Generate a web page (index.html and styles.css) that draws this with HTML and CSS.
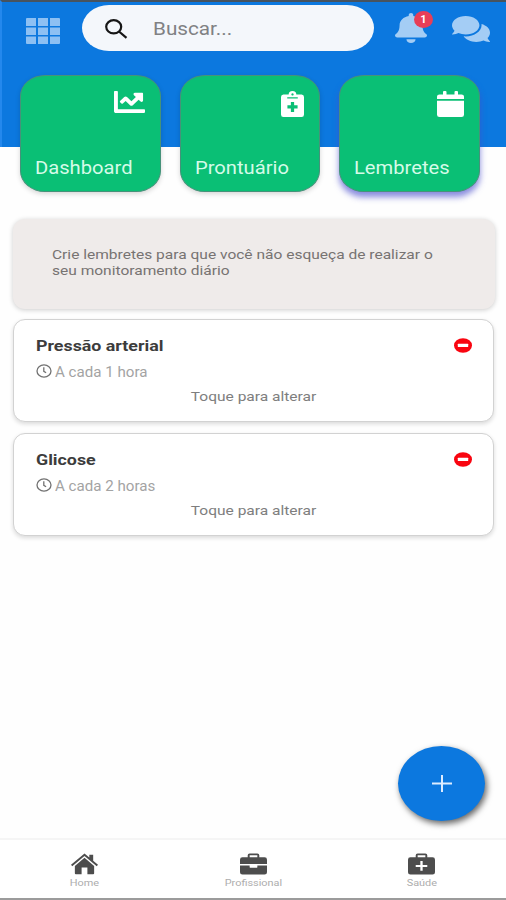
FILE: index.html
```html
<!DOCTYPE html>
<html lang="pt-BR">
  <head>
    <meta charset="UTF-8" />
    <meta name="viewport" content="width=device-width, initial-scale=1.0" />
    <title>Lembretes</title>
    <link rel="stylesheet" href="styles.css">
  </head>
  <body>
    <header class="header">
      <div class="topbar">
        <svg class="icon-grid" viewBox="0 0 34 26" preserveAspectRatio="none">
          <path d="M0 1q0-1 1-1h9v8H0zM12 0h10v8H12zM24 0h9q1 0 1 1v7H24zM0 9.500h10v7.500H0zM12 9.500h10v7.500H12zM24 9.500h10v7.500H24zM0 18.500h10V26H1q-1 0-1-1zM12 18.500h10V26H12zM24 18.500h10V25q0 1-1 1h-9z" />
        </svg>
        <div class="search">
          <svg class="icon-search" viewBox="0 0 23 20">
            <ellipse cx="8.700" cy="7.800" rx="7.500" ry="6.600" />
            <path d="M14 12.500l7.500 6.300" />
          </svg>
          <span class="wide">Buscar...</span>
        </div>
        <div class="bell">
          <svg class="icon-bell" viewBox="0 0 448 512" preserveAspectRatio="none">
            <path d="M224 512c35.320 0 63.970-28.650 63.970-64H160.030c0 35.350 28.650 64 63.970 64zm215.390-149.710c-19.320-20.760-55.470-51.990-55.470-154.290 0-77.700-54.480-139.900-127.940-155.160V32c0-17.670-14.320-32-31.980-32s-31.980 14.330-31.980 32v20.840C118.560 68.100 64.080 130.300 64.080 208c0 102.300-36.150 133.530-55.470 154.290-6 6.450-8.660 14.160-8.610 21.710.11 16.400 12.980 32 32.100 32h383.800c19.120 0 32-15.600 32.100-32 .05-7.550-2.610-15.270-8.610-21.710z" />
          </svg>
          <span class="badge">1</span>
        </div>
        <svg class="icon-chat" viewBox="0 32 576 448" preserveAspectRatio="none">
          <path d="M416 192c0-88.400-93.100-160-208-160S0 103.600 0 192c0 34.300 14.100 65.900 38 92-13.400 30.200-35.500 54.200-35.800 54.500-2.200 2.300-2.800 5.700-1.500 8.700S4.800 352 8 352c36.600 0 66.900-12.300 88.700-25 32.200 15.700 70.300 25 111.300 25 114.900 0 208-71.600 208-160zm122 220c23.900-26 38-57.700 38-92 0-66.900-53.500-124.200-129.300-148.100.9 6.600 1.300 13.300 1.300 20.100 0 105.900-107.700 192-240 192-10.800 0-21.300-.8-31.700-1.900C207.800 439.600 281.800 480 368 480c41 0 79.100-9.200 111.300-25 21.800 12.700 52.100 25 88.700 25 3.200 0 6.100-1.900 7.300-4.800 1.300-2.900.7-6.300-1.500-8.700-.3-.3-22.400-24.200-35.800-54.500z" />
        </svg>
      </div>
      <nav class="cards">
        <div class="card">
          <svg class="icon-chart" viewBox="0 64 512 384" preserveAspectRatio="none">
            <path d="M496 384H64V80c0-8.840-7.160-16-16-16H16C7.160 64 0 71.160 0 80v336c0 17.670 14.330 32 32 32h464c8.840 0 16-7.160 16-16v-32c0-8.840-7.160-16-16-16zM464 96H345.940c-21.380 0-32.090 25.850-16.970 40.970l32.400 32.400L288 242.750l-73.370-73.370c-12.500-12.500-32.760-12.500-45.250 0l-68.690 68.690c-6.250 6.250-6.250 16.380 0 22.630l22.620 22.620c6.250 6.250 16.380 6.250 22.630 0L192 237.250l73.370 73.370c12.500 12.500 32.760 12.500 45.250 0l96-96 32.400 32.400c15.120 15.120 40.970 4.410 40.970-16.970V112c.01-8.840-7.150-16-15.990-16z" />
          </svg>
          <span class="wide">Dashboard</span>
        </div>
        <div class="card">
          <svg class="icon-clip" viewBox="0 0 24 26" preserveAspectRatio="none">
            <path fill-rule="evenodd" d="M2.500 3.500H8a4 3.500 0 0 1 8 0h5.500Q24 3.500 24 6v17.500q0 2.500-2.500 2.500h-19Q0 26 0 23.500V6q0-2.500 2.500-2.500zM12 2.200a1.200 1.200 0 1 0 .01 0zM6.500 6.200v1.300h11V6.200zM10.300 11v3.300H6.700v3.300h3.600V21h3.400v-3.400h3.600v-3.300h-3.600V11z" />
          </svg>
          <span class="wide">Prontuário</span>
        </div>
        <div class="card active">
          <svg class="icon-cal" viewBox="0 0 27 26" preserveAspectRatio="none">
            <path d="M0 8V5.500Q0 3.500 2.500 3.500H6V1q0-1 1-1h1.500q1 0 1 1v2.500h8V1q0-1 1-1H20q1 0 1 1v2.500h3.500Q27 3.500 27 5.500V8zM0 9.700h27v14q0 2.300-2.500 2.300h-22Q0 26 0 23.700z" />
          </svg>
          <span class="wide">Lembretes</span>
        </div>
      </nav>
    </header>

    <main class="content">
      <div class="info">
        <p class="wide">Crie lembretes para que você não esqueça de realizar o<br>seu monitoramento diário</p>
      </div>
      <div class="reminder">
        <div class="title">
          <h2 class="wide">Pressão arterial</h2>
          <svg class="icon-remove" viewBox="0 0 18 15">
            <ellipse cx="9" cy="7.500" rx="9" ry="7.300" />
            <rect x="3.800" y="5.700" width="10.400" height="3.400" rx=".5" />
          </svg>
        </div>
        <div class="time">
          <svg class="icon-clock" viewBox="0 0 16 14">
            <ellipse cx="8" cy="7" rx="7" ry="6.100" />
            <path d="M7.800 3.200v4.200l2.300 1.400" />
          </svg>
          <span class="wide">A cada 1 hora</span>
        </div>
        <p class="hint"><span class="wide">Toque para alterar</span></p>
      </div>
      <div class="reminder">
        <div class="title">
          <h2 class="wide">Glicose</h2>
          <svg class="icon-remove" viewBox="0 0 18 15">
            <ellipse cx="9" cy="7.500" rx="9" ry="7.300" />
            <rect x="3.800" y="5.700" width="10.400" height="3.400" rx=".5" />
          </svg>
        </div>
        <div class="time">
          <svg class="icon-clock" viewBox="0 0 16 14">
            <ellipse cx="8" cy="7" rx="7" ry="6.100" />
            <path d="M7.800 3.200v4.200l2.300 1.400" />
          </svg>
          <span class="wide">A cada 2 horas</span>
        </div>
        <p class="hint"><span class="wide">Toque para alterar</span></p>
      </div>
    </main>

    <button class="fab" aria-label="Adicionar">
      <svg viewBox="0 0 20 17">
        <path d="M10 0v17M0 8.500h20" />
      </svg>
    </button>

    <footer class="tabs">
      <div class="tab">
        <svg viewBox="0 0 28 22">
          <path d="M14 4.500 24 13v7.500q0 1-1 1h-6v-7h-6v7H5q-1 0-1-1V13z" />
          <path d="M14 0 19 4.200V1.500h4v6.200l5 4.200-1.300 1.400L14 2.600 1.300 13.300 0 11.900z" />
        </svg>
        <span class="wide">Home</span>
      </div>
      <div class="tab">
        <svg viewBox="0 0 28 22">
          <path fill-rule="evenodd" d="M8 4V2q0-2 2-2h8q2 0 2 2v2h5.500Q28 4 28 6.500V11H0V6.500Q0 4 2.500 4zM10 4h8V2h-8z" />
          <path d="M0 12.500h10V14q0 1 1 1h6q1 0 1-1v-1.500h10v7q0 2.500-2.500 2.500h-23Q0 22 0 19.500z" />
        </svg>
        <span class="wide">Profissional</span>
      </div>
      <div class="tab">
        <svg viewBox="0 0 28 22">
          <path fill-rule="evenodd" d="M8 4V2q0-2 2-2h8q2 0 2 2v2h5.500Q28 4 28 6.500v13q0 2.500-2.500 2.500h-23Q0 22 0 19.500v-13Q0 4 2.500 4zM10 4h8V2h-8zM12.800 8v4H8v2h4.800v4h2.400v-4H20v-2h-4.800V8z" />
        </svg>
        <span class="wide">Saúde</span>
      </div>
    </footer>
  </body>
</html>
```

FILE: styles.css
```css
* {
  box-sizing: border-box;
}

body {
  margin: 0;
  height: 900px;
  display: flex;
  flex-direction: column;
  overflow: hidden;
  background-color: #fefefe;
  font-family: Roboto, "Liberation Sans", sans-serif;
}

svg {
  display: block;
  flex: none;
}

h2,
p {
  margin: 0;
}

/* extended lettering */
.wide {
  display: inline-block;
  white-space: nowrap;
  transform: scaleX(1.15);
  transform-origin: left center;
}

.header {
  height: 147px;
  border-top: 2px solid #47535f;
  border-left: 2px solid #2488ed;
  background-color: #0c78df;
  flex: none;
}

.topbar {
  display: flex;
  align-items: flex-start;
  height: 73px;
  padding: 3px 16px 0 24px;
}

.icon-grid {
  width: 34px;
  height: 26px;
  margin-top: 13px;
  fill: #8dc0f3;
}

.search {
  display: flex;
  align-items: center;
  width: 292px;
  height: 46px;
  margin-left: 22px;
  padding-left: 23px;
  border-radius: 27px / 23px;
  background-color: #f4f7fb;
  color: #808183;
  font-size: 18px;
}

.search span {
  margin-left: 25px;
}

.icon-search {
  width: 23px;
  height: 20px;
  margin-top: 1px;
  fill: none;
  stroke: #161616;
  stroke-width: 2.200;
}

.bell {
  position: relative;
  margin: 8px 0 0 21px;
}

.icon-bell {
  width: 32px;
  height: 30px;
  fill: #a4cdf5;
}

.badge {
  position: absolute;
  top: -2px;
  left: 19px;
  width: 19px;
  height: 17px;
  border-radius: 50%;
  background-color: #e83e57;
  color: #fff;
  font-size: 11px;
  font-weight: bold;
  line-height: 17px;
  text-align: center;
}

.icon-chat {
  width: 38px;
  height: 26px;
  margin: 11px 0 0 25px;
  fill: #a4cdf5;
}

.cards {
  display: flex;
  gap: 19px;
  padding-left: 18px;
}

.card {
  display: flex;
  flex-direction: column;
  justify-content: space-between;
  width: 140.500px;
  height: 117px;
  padding: 15px 15px 11px 14px;
  border: 1px solid #46927a;
  border-radius: 25px / 21px;
  background-color: #0abf75;
  box-shadow: 0 2px 5px rgba(0, 0, 0, 0.16);
  color: #d5fbe8;
  font-size: 18.500px;
  line-height: 24px;
}

.card .wide {
  transform: scaleX(1.09);
}

.card.active {
  box-shadow: 0 5px 6px rgba(70, 76, 205, 0.65);
}

.card svg {
  align-self: flex-end;
  fill: #fff;
}

.icon-chart {
  width: 31px;
  height: 22px;
}

.icon-clip {
  width: 23px;
  height: 26px;
}

.icon-cal {
  width: 27px;
  height: 26px;
}

.content {
  flex: 1;
  padding: 72px 12px 0 13px;
}

.info {
  height: 90px;
  margin-right: -1px;
  padding: 27px 39px;
  border-radius: 12px;
  background-color: #efebea;
  box-shadow: 0 1px 5px rgba(0, 0, 0, 0.2);
  color: #777372;
  font-size: 13.500px;
  line-height: 16px;
}

.reminder {
  height: 103px;
  margin-top: 11px;
  padding: 15px 21px 0 22px;
  border: 1px solid #d2d2d2;
  border-radius: 12px;
  background-color: #fff;
  box-shadow: 0 2px 4px rgba(0, 0, 0, 0.14);
}

.info + .reminder {
  margin-top: 10px;
}

.title,
.time {
  display: flex;
  align-items: center;
}

.title {
  justify-content: space-between;
  height: 20px;
}

.title h2 {
  padding-top: 1px;
  color: #3c3c3c;
  font-size: 15.500px;
  font-weight: bold;
}

.icon-remove {
  width: 18px;
  height: 15px;
  fill: #f90510;
}

.icon-remove rect {
  fill: #fff;
}

.time {
  gap: 3px;
  height: 32px;
  color: #a3a3a3;
  font-size: 14px;
}

.time .wide {
  padding-top: 1px;
  transform: scaleX(1.08);
}

.icon-clock {
  width: 16px;
  height: 14px;
  fill: none;
  stroke: #727272;
  stroke-width: 1.300;
}

.hint {
  color: #7e7e7e;
  font-size: 13.500px;
  line-height: 18px;
  text-align: center;
}

.hint .wide,
.tab .wide {
  transform-origin: center;
}

.fab {
  position: absolute;
  right: 21px;
  bottom: 79px;
  display: flex;
  align-items: center;
  justify-content: center;
  width: 87px;
  height: 75px;
  padding: 0;
  border: 0;
  border-radius: 50%;
  background-color: #0c78df;
  box-shadow: 2px 3px 6px rgba(0, 0, 0, 0.6);
}

.fab svg {
  width: 20px;
  height: 17px;
  stroke: #dcecff;
  stroke-width: 2;
}

.tabs {
  display: flex;
  height: 62px;
  border-top: 2px solid #f5f5f5;
  border-bottom: 2px solid #9b9b9b;
  background-color: #fff;
}

.tab {
  display: flex;
  flex: 1;
  flex-direction: column;
  align-items: center;
  padding-top: 13px;
  color: #adadad;
  font-size: 8.500px;
  line-height: 12px;
}

.tab .wide {
  transform: scaleX(1.28);
}

.tab svg {
  width: 27px;
  height: 22px;
  margin-bottom: 2px;
  fill: #4d4d4d;
}
```
